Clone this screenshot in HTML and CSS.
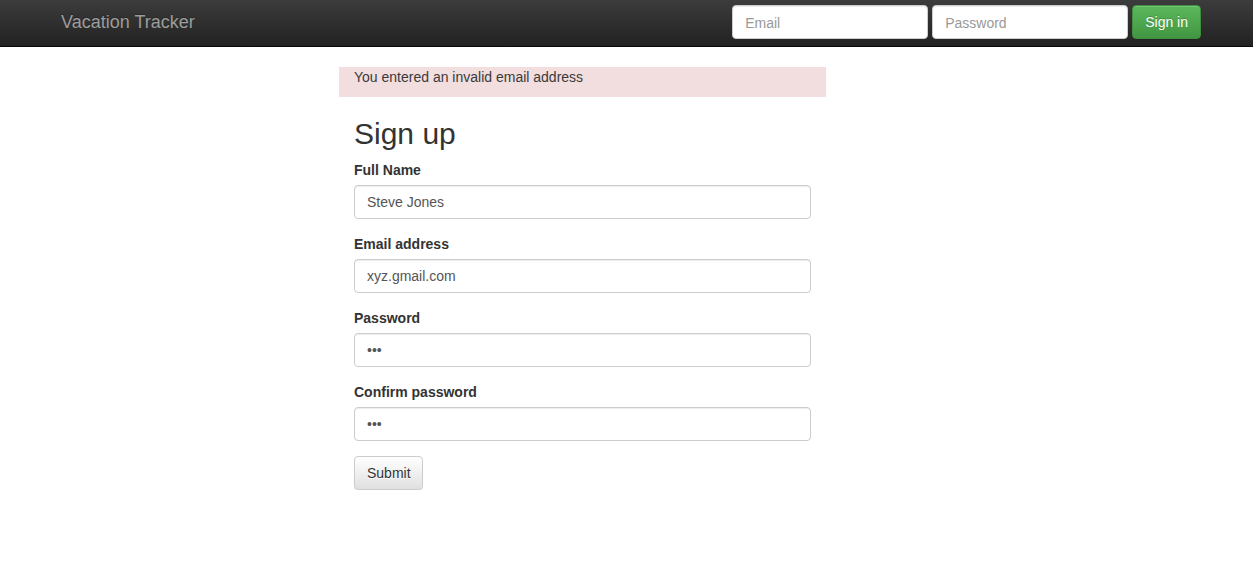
FILE: index.html
```html
<!DOCTYPE html>
<html lang="en">
<head>
<meta charset="utf-8">
<title>Vacation Tracker</title>
<link rel="stylesheet" href="styles.css">
</head>
<body>
<nav class="navbar">
  <div class="container nav-inner">
    <a class="brand" href="#">Vacation Tracker</a>
    <form class="nav-form">
      <input class="nav-input" type="text" placeholder="Email">
      <input class="nav-input" type="password" placeholder="Password">
      <button class="btn btn-success" type="button">Sign in</button>
    </form>
  </div>
</nav>
<main class="container">
  <div class="col">
    <div class="alert">You entered an invalid email address</div>
    <form class="signup">
      <h2 class="title">Sign up</h2>
      <div class="group">
        <label class="label">Full Name</label>
        <input class="input" type="text" value="Steve Jones">
      </div>
      <div class="group">
        <label class="label">Email address</label>
        <input class="input" type="text" value="xyz.gmail.com">
      </div>
      <div class="group">
        <label class="label">Password</label>
        <input class="input" type="password" value="abc">
      </div>
      <div class="group">
        <label class="label">Confirm password</label>
        <input class="input" type="password" value="abc">
      </div>
      <button class="btn btn-default" type="button">Submit</button>
    </form>
  </div>
</main>
</body>
</html>
```
FILE: styles.css
```css
* { box-sizing: border-box; }
html, body { margin: 0; padding: 0; }
body {
  font-family: "Liberation Sans", Arial, sans-serif;
  font-size: 14px;
  line-height: 1.428571;
  color: #333;
  background: #fff;
}
.container {
  width: 1170px;
  margin-left: 46px;
  padding: 0 15px;
}
.navbar {
  height: 47px;
  background: linear-gradient(to bottom, #3c3c3c 0%, #222 100%);
  border-bottom: 1px solid #080808;
}
.nav-inner {
  display: flex;
  justify-content: space-between;
  align-items: flex-start;
}
.brand {
  font-size: 18px;
  line-height: 20px;
  margin-top: 12px;
  color: #9d9d9d;
  text-decoration: none;
  text-shadow: 0 -1px 0 rgba(0,0,0,.25);
}
.nav-form {
  display: flex;
  gap: 4px;
  margin: 5px 0 0;
}
.nav-input {
  width: 196px;
  height: 34px;
  padding: 7px 12px 5px;
  font-family: "Liberation Sans", Arial, sans-serif;
  font-size: 14px;
  color: #555;
  background: #fff;
  border: 1px solid #ccc;
  border-radius: 4px;
  box-shadow: inset 0 1px 1px rgba(0,0,0,.075);
  outline: none;
}
.nav-input::placeholder, .input::placeholder { color: #999; }
.btn {
  height: 34px;
  padding: 7px 12px 5px;
  font-family: "Liberation Sans", Arial, sans-serif;
  font-size: 14px;
  line-height: 1.428571;
  border-radius: 4px;
  border: 1px solid transparent;
  cursor: pointer;
}
.btn-success {
  color: #fff;
  background: linear-gradient(to bottom, #5cb85c 0%, #419641 100%);
  border-color: #3e8f3e;
  text-shadow: 0 -1px 0 rgba(0,0,0,.2);
  box-shadow: inset 0 1px 0 rgba(255,255,255,.15), 0 1px 1px rgba(0,0,0,.075);
}
.btn-default {
  width: 69px;
  color: #333;
  background: linear-gradient(to bottom, #fff 0%, #e0e0e0 100%);
  border-color: #ccc;
  text-shadow: 0 1px 0 #fff;
  box-shadow: inset 0 1px 0 rgba(255,255,255,.15), 0 1px 1px rgba(0,0,0,.075);
}
.col {
  width: 487px;
  margin-left: 278px;
}
.alert {
  margin: 20px 0 20px;
  padding: 1px 15px 9px;
  background: #f2dede;
  color: #3a3a3a;
}
.signup { padding: 0 15px; }
.title {
  font-size: 30px;
  font-weight: 500;
  line-height: 1.1;
  margin: 20px 0 11px;
  color: #333;
}
.group { margin-bottom: 16px; }
.group:last-of-type { margin-bottom: 15px; }
.label {
  display: block;
  font-weight: bold;
  margin-bottom: 4px;
}
.input {
  display: block;
  width: 100%;
  height: 34px;
  padding: 6px 12px;
  font-family: "Liberation Sans", Arial, sans-serif;
  font-size: 14px;
  color: #555;
  background: #fff;
  border: 1px solid #ccc;
  border-radius: 4px;
  box-shadow: inset 0 1px 1px rgba(0,0,0,.075);
  outline: none;
}
```
